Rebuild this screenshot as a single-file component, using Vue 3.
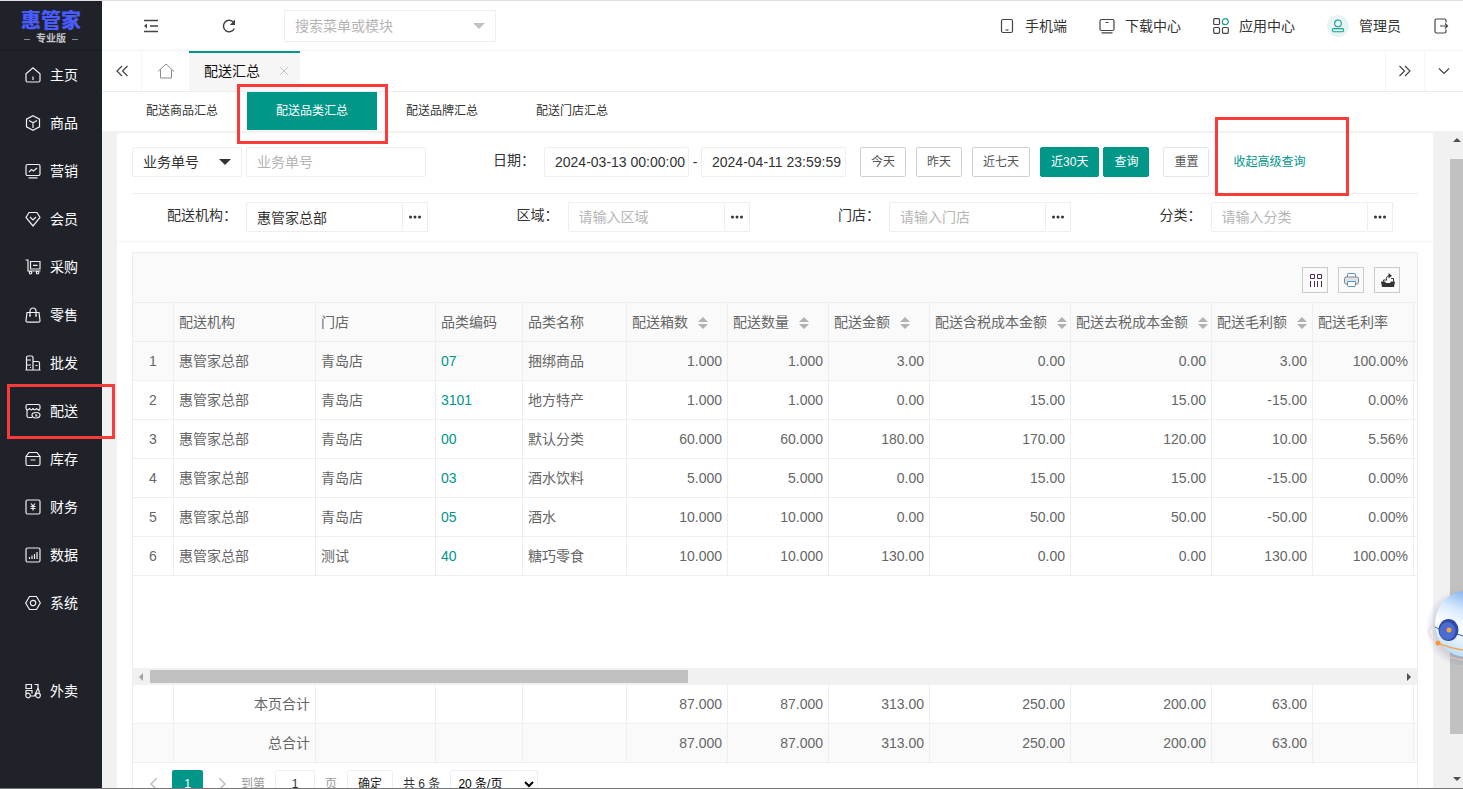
<template>
  <div class="layout">
    <aside class="sidebar">
      <div class="logo">
        <strong class="logo-name">惠管家</strong>
        <span class="logo-edition">专业版</span>
      </div>
      <nav class="menu">
        <a
          v-for="item in menus"
          :key="item.name"
          href="#"
          class="menu-item"
          :class="{ 'menu-extra': item.extra }"
        >
          <svg class="menu-icon" viewBox="0 0 16 16"><path :d="item.icon" /></svg>
          <span>{{ item.name }}</span>
          <i v-if="item.marked" class="mark mark-menu"></i>
        </a>
      </nav>
    </aside>

    <div class="main">
      <header class="header">
        <button class="icon-btn" aria-label="收起菜单">
          <svg class="line-icon" viewBox="0 0 16 16"><path d="M1 2.500h14M7 8h8M1 13.500h14" /><path class="fill" d="M1 8l3-2.500v5z" /></svg>
        </button>
        <button class="icon-btn refresh" aria-label="刷新">
          <svg class="line-icon" viewBox="0 0 16 16"><path d="M13.300 10.500A5.700 5.700 0 1 1 12.600 4.500" /><path class="fill" d="M14 1.500v5.500H8.800z" /></svg>
        </button>
        <div class="search">
          <input type="text" placeholder="搜索菜单或模块" aria-label="搜索菜单或模块" />
          <svg class="caret caret-light" viewBox="0 0 12 6"><path d="M0 0h12L6 6z" /></svg>
        </div>
        <div class="header-links">
          <a href="#">
            <svg class="line-icon" viewBox="0 0 16 16"><rect x="2.500" y="1.500" width="11" height="13" rx="1.500" /><path d="M6.500 12h3" /></svg>
            手机端
          </a>
          <a href="#">
            <svg class="line-icon" viewBox="0 0 16 16"><rect x="1" y="1.500" width="14" height="11" rx="1.500" /><path d="M6.500 4.500h3M2.500 14.800h11" /></svg>
            下载中心
          </a>
          <a href="#">
            <svg class="line-icon" viewBox="0 0 16 16"><rect x=".7" y=".7" width="5.800" height="5.800" rx="1" /><rect x=".7" y="9.500" width="5.800" height="5.800" rx="1" /><rect x="9.500" y="9.500" width="5.800" height="5.800" rx="1" /><circle class="teal" cx="12.300" cy="3.700" r="3" /></svg>
            应用中心
          </a>
          <a href="#" class="user">
            <span class="avatar">
              <svg class="line-icon" viewBox="0 0 16 16"><circle class="teal" cx="8" cy="5" r="3.800" /><rect class="teal" x="1.500" y="11" width="13" height="3.500" rx="1.700" /></svg>
            </span>
            管理员
          </a>
          <a href="#" class="logout" aria-label="退出">
            <svg class="line-icon" viewBox="0 0 16 16"><path d="M13 4.500V2.500a1.500 1.500 0 0 0-1.500-1.500h-8A1.500 1.500 0 0 0 2 2.500v11A1.500 1.500 0 0 0 3.500 15h8a1.500 1.500 0 0 0 1.500-1.500v-2M7 8h7.500M12 5.500L14.500 8 12 10.500" /></svg>
          </a>
        </div>
      </header>

      <div class="tabs">
        <button class="tab-ctrl" aria-label="向左">
          <svg class="line-icon" viewBox="0 0 16 16"><path d="M8 3L3 8l5 5M13.500 3l-5 5 5 5" /></svg>
        </button>
        <button class="tab-home" aria-label="首页">
          <svg class="home-icon" viewBox="0 0 18 18"><path d="M1 9.500L9 2l8 7.500M3.500 7.500V16h11V7.500" /></svg>
        </button>
        <div class="tab-active">
          <span>配送汇总</span>
          <button aria-label="关闭">
            <svg viewBox="0 0 8 8"><path d="M0 0l8 8M8 0L0 8" /></svg>
          </button>
        </div>
        <button class="tab-ctrl tab-next" aria-label="向右">
          <svg class="line-icon" viewBox="0 0 16 16"><path d="M2.500 3l5 5-5 5M8 3l5 5-5 5" /></svg>
        </button>
        <button class="tab-ctrl tab-more" aria-label="更多">
          <svg class="line-icon" viewBox="0 0 16 16"><path d="M3 5.500l5 5 5-5" /></svg>
        </button>
      </div>

      <div class="sub-tabs">
        <button
          v-for="(name, index) in subTabs"
          :key="name"
          :class="{ active: index === currentTab }"
          @click="currentTab = index"
        >
          {{ name }}
          <i v-if="index === 1" class="mark mark-tab"></i>
        </button>
      </div>

      <div class="content">
        <div class="card">
          <form class="filters" @submit.prevent>
            <div class="filter-row">
              <div class="select-box">
                <select aria-label="单号类型">
                  <option>业务单号</option>
                </select>
                <svg class="caret" viewBox="0 0 12 6"><path d="M0 0h12L6 6z" /></svg>
              </div>
              <input class="field order-no" type="text" placeholder="业务单号" aria-label="业务单号" />
              <label class="field-label date-label" for="dateStart">日期：</label>
              <input id="dateStart" v-model="dateStart" class="field date" type="text" />
              <span class="dash">-</span>
              <input v-model="dateEnd" class="field date" type="text" aria-label="结束日期" />
              <div class="range-btns">
                <button class="btn">今天</button>
                <button class="btn">昨天</button>
                <button class="btn">近七天</button>
                <button class="btn primary">近30天</button>
              </div>
              <button class="btn primary query">查询</button>
              <button class="btn reset">重置</button>
              <a href="#" class="toggle">收起高级查询<i class="mark mark-toggle"></i></a>
            </div>
            <div class="filter-row advanced">
              <div v-for="f in filters" :key="f.id" class="filter-item">
                <label class="field-label" :for="f.id">{{ f.label }}：</label>
                <input :id="f.id" v-model="f.value" class="field picker" type="text" :placeholder="f.placeholder" />
                <button class="more" :aria-label="'选择' + f.label">
                  <svg viewBox="0 0 12 4"><circle cx="1.500" cy="2" r="1.500" /><circle cx="6" cy="2" r="1.500" /><circle cx="10.500" cy="2" r="1.500" /></svg>
                </button>
              </div>
            </div>
          </form>

          <div class="grid">
            <div class="toolbar">
              <button aria-label="筛选列">
                <svg viewBox="0 0 16 16" class="tool columns"><path d="M3.500 2.500h4v4h-4zM10.500 2.500h4v4h-4zM3.500 9v6M7.500 9v6M10.500 9v6M14.500 9v6" /></svg>
              </button>
              <button aria-label="打印">
                <svg viewBox="0 0 16 16" class="tool print"><path class="paper" d="M4.500 5V3a1.500 1.500 0 0 1 1.500-1.500h5A1.500 1.500 0 0 1 12.500 3v2" /><path class="body" d="M4.500 12H3a1.500 1.500 0 0 1-1.500-1.500v-4A1.500 1.500 0 0 1 3 5h11a1.500 1.500 0 0 1 1.500 1.500v4A1.500 1.500 0 0 1 14 12h-1.500" /><path class="paper" d="M4.500 9.500h8V13a1.500 1.500 0 0 1-1.500 1.500H6A1.500 1.500 0 0 1 4.500 13z" /></svg>
              </button>
              <button aria-label="导出">
                <svg viewBox="0 0 16 16" class="tool"><path d="M4.500 9.500V8H7M12 6.500h2.500V9.500M7.500 8.500c-.5-3 .5-4.800 3-4.800" /><path class="solid" d="M9.500 1l3.500 2.700-3.500 2.800zM2 9.500h4l1 1.500h4l1-1.500h4L15 15H3z" /></svg>
              </button>
            </div>
            <table>
              <colgroup>
                <col v-for="c in columns" :key="c.key" :class="c.size" />
                <col />
              </colgroup>
              <thead>
                <tr>
                  <th v-for="c in columns" :key="c.key">
                    {{ c.title }}
                    <svg v-if="c.sort" class="sort" viewBox="0 0 10 12"><path d="M0 5l5-5 5 5zM0 7h10l-5 5z" /></svg>
                  </th>
                  <th></th>
                </tr>
              </thead>
              <tbody>
                <tr v-for="(row, i) in rows" :key="i" :class="{ hover: i === 0 }">
                  <td class="center">{{ i + 1 }}</td>
                  <td>{{ row[0] }}</td>
                  <td>{{ row[1] }}</td>
                  <td><a href="#">{{ row[2] }}</a></td>
                  <td>{{ row[3] }}</td>
                  <td v-for="(v, j) in row.slice(4)" :key="j" class="num">{{ v }}</td>
                  <td></td>
                </tr>
              </tbody>
            </table>
            <div class="blank"></div>
            <div class="h-scroll">
              <svg viewBox="0 0 6 8" class="arrow dim"><path d="M5 0v8L1 4z" /></svg>
              <div class="h-track"><div class="h-thumb"></div></div>
              <svg viewBox="0 0 6 8" class="arrow"><path d="M1 0v8l4-4z" /></svg>
            </div>
            <table>
              <colgroup>
                <col v-for="c in columns" :key="c.key" :class="c.size" />
                <col />
              </colgroup>
              <tbody>
                <tr v-for="(t, i) in totals" :key="t" :class="{ hover: i === 1 }">
                  <td></td>
                  <td class="num">{{ t }}</td>
                  <td></td>
                  <td></td>
                  <td></td>
                  <td v-for="(v, j) in sums" :key="j" class="num">{{ v }}</td>
                  <td></td>
                  <td></td>
                </tr>
              </tbody>
            </table>
            <div class="pager">
              <button class="page-arrow" aria-label="上一页">
                <svg viewBox="0 0 8 12"><path d="M7 0L1 6l6 6" /></svg>
              </button>
              <button class="page-current">1</button>
              <button class="page-arrow" aria-label="下一页">
                <svg viewBox="0 0 8 12"><path d="M1 0l6 6-6 6" /></svg>
              </button>
              <label for="page">到第</label>
              <input id="page" v-model="page" type="text" />
              <span>页</span>
              <button class="page-go">确定</button>
              <span class="page-count">共 6 条</span>
              <select aria-label="每页条数">
                <option>20 条/页</option>
              </select>
            </div>
          </div>
        </div>
        <div class="v-scroll">
          <svg viewBox="0 0 8 6" class="v-arrow"><path d="M0 5h8L4 1z" /></svg>
          <div class="v-track"><div class="v-thumb"></div></div>
          <svg viewBox="0 0 8 6" class="v-arrow"><path d="M0 1h8L4 5z" /></svg>
        </div>
      </div>
    </div>

    <svg class="robot" viewBox="0 0 38 80">
      <defs>
        <linearGradient id="shell" x1="0.700" y1="0" x2="0.300" y2="1">
          <stop offset="0" stop-color="#6ba4ee" />
          <stop offset="0.350" stop-color="#d6e8fd" />
          <stop offset="0.600" stop-color="#ffffff" />
          <stop offset="1" stop-color="#b5dcf8" />
        </linearGradient>
        <radialGradient id="glow">
          <stop offset="0.700" stop-color="#5064a0" stop-opacity="0.250" />
          <stop offset="1" stop-color="#5064a0" stop-opacity="0" />
        </radialGradient>
      </defs>
      <circle cx="40" cy="43" r="40" fill="url(#glow)" />
      <ellipse cx="41" cy="39" rx="31" ry="33" fill="url(#shell)" />
      <path class="visor" d="M10 42l6 3M32 49l6 2" />
      <ellipse cx="23.500" cy="45" rx="10" ry="11" fill="#3149a8" />
      <ellipse cx="22.500" cy="46" rx="8" ry="9" fill="#4b6bd0" />
      <circle cx="24" cy="45" r="2.500" fill="#f6a33c" />
      <path class="orbit faint" d="M10 39c-9 4-8 13 3 19" />
      <path class="orbit" d="M13 58c7 3 16 6 25 7" />
      <path class="orbit faint" d="M17 61c-2 8 10 13 21 14" />
      <circle cx="13" cy="58" r="2.500" fill="#f79a34" />
    </svg>
  </div>
</template>

<script setup>
import { ref, reactive } from 'vue';

const menus = [
  { name: '主页', icon: 'M1 6.800L8 .8l7 6V13.500A1.500 1.500 0 0 1 13.500 15h-11A1.500 1.500 0 0 1 1 13.500zM8 9.500V13' },
  { name: '商品', icon: 'M8 .7l6.500 3.500v7.600L8 15.300l-6.500-3.500V4.200zM4 5.500l4 2.200 4-2.200M8 7.700V13' },
  { name: '营销', icon: 'M2.500 1.500h11A1.500 1.500 0 0 1 15 3v8a1.500 1.500 0 0 1-1.500 1.500h-11A1.500 1.500 0 0 1 1 11V3a1.500 1.500 0 0 1 1.500-1.500zM4 9l2.500-2.500L8.500 8 12 5M3.500 14.800h9' },
  { name: '会员', icon: 'M4 1.500h8l3 5L8 15 1 6.500zM5 6l3 3 3-3' },
  { name: '采购', icon: 'M.5 1H3v11h12.500M5.500 2.500h9.500V10H5.500zM8 6.300h4.500M5.500 12.500a1.200 1.200 0 1 0 .1 2.400 1.200 1.200 0 0 0 0-2.400M12.500 12.500a1.200 1.200 0 1 0 .1 2.400 1.200 1.200 0 0 0 0-2.400' },
  { name: '零售', icon: 'M2 5.500h12l1 8a1.500 1.500 0 0 1-1.500 1.700h-11A1.500 1.500 0 0 1 1 13.500zM5 9V4a3 3 0 0 1 6 0v5M4 9h2M10 9h2' },
  { name: '批发', icon: 'M1.500 15V2.500A1.500 1.500 0 0 1 3 1h3.500A1.500 1.500 0 0 1 8 2.500V15M8 6.500h5A1.500 1.500 0 0 1 14.500 8v7M.5 15h15M1.500 5H6M1.500 10H6M5 12.500h1M10.500 10.500h2' },
  { name: '配送', icon: 'M7 14.500H3.500A1.500 1.500 0 0 1 2 13V7M14 7v1M1 5V3a1.500 1.500 0 0 1 1.500-1.500h11A1.500 1.500 0 0 1 15 3v2c0 2.500-3 2.500-3.500 0C11 7.500 8.500 7.500 8 5 7.500 7.500 5 7.500 4.500 5 4 7.500 1 7.500 1 5M11 9.500c2.500 0 4 1.200 4 2.600S13.500 15 11 15s-4-1.200-4-2.900 1.500-2.600 4-2.600M11 11v2h1.500', marked: true },
  { name: '库存', icon: 'M4 1.500h8l3 4v7.500a1.500 1.500 0 0 1-1.500 1.500h-11A1.500 1.500 0 0 1 1 13V5.500zM1 5.500h14M5.500 9h5' },
  { name: '财务', icon: 'M2.500 1h11A1.500 1.500 0 0 1 15 2.500v11a1.500 1.500 0 0 1-1.500 1.500h-11A1.500 1.500 0 0 1 1 13.500v-11A1.500 1.500 0 0 1 2.500 1zM6 4.500l2 2.500 2-2.500M8 7v4.500M5.500 7.500h5M5.500 9.500h5' },
  { name: '数据', icon: 'M2.500 1h11A1.500 1.500 0 0 1 15 2.500v11a1.500 1.500 0 0 1-1.500 1.500h-11A1.500 1.500 0 0 1 1 13.500v-11A1.500 1.500 0 0 1 2.500 1zM4.500 10v2M7 8.500V12M9.500 7v5M12 5v7' },
  { name: '系统', icon: 'M4.500 1.500h7L15.300 8l-3.800 6.500h-7L.7 8zM8 5.300a2.700 2.700 0 1 0 .1 5.400 2.700 2.700 0 0 0-.1-5.400' },
  { name: '外卖', icon: 'M1 1.500h5.500v4H1zM.5 7.500H7v3M9.500 1.500H13V5l1.500 4.500M1 8v4M5.500 13h4L13 5M3 10.200a2.300 2.300 0 1 0 .1 4.600 2.300 2.300 0 0 0-.1-4.600M13 10.200a2.300 2.300 0 1 0 .1 4.600 2.300 2.300 0 0 0-.1-4.600', extra: true }
];

const subTabs = ['配送商品汇总', '配送品类汇总', '配送品牌汇总', '配送门店汇总'];
const currentTab = ref(1);

const dateStart = ref('2024-03-13 00:00:00');
const dateEnd = ref('2024-04-11 23:59:59');
const page = ref('1');

const filters = reactive([
  { id: 'org', label: '配送机构', value: '惠管家总部', placeholder: '请输入配送机构' },
  { id: 'area', label: '区域', value: '', placeholder: '请输入区域' },
  { id: 'shop', label: '门店', value: '', placeholder: '请输入门店' },
  { id: 'category', label: '分类', value: '', placeholder: '请输入分类' }
]);

const columns = [
  { key: 'index', title: '', size: 'c-index' },
  { key: 'org', title: '配送机构', size: 'c-org' },
  { key: 'shop', title: '门店', size: 'c-shop' },
  { key: 'code', title: '品类编码', size: 'c-code' },
  { key: 'name', title: '品类名称', size: 'c-name' },
  { key: 'box', title: '配送箱数', size: 'c-num', sort: true },
  { key: 'qty', title: '配送数量', size: 'c-num', sort: true },
  { key: 'amount', title: '配送金额', size: 'c-num', sort: true },
  { key: 'costTax', title: '配送含税成本金额', size: 'c-wide', sort: true },
  { key: 'cost', title: '配送去税成本金额', size: 'c-wide', sort: true },
  { key: 'profit', title: '配送毛利额', size: 'c-num', sort: true },
  { key: 'rate', title: '配送毛利率', size: 'c-num' }
];

const rows = [
  ['惠管家总部', '青岛店', '07', '捆绑商品', '1.000', '1.000', '3.00', '0.00', '0.00', '3.00', '100.00%'],
  ['惠管家总部', '青岛店', '3101', '地方特产', '1.000', '1.000', '0.00', '15.00', '15.00', '-15.00', '0.00%'],
  ['惠管家总部', '青岛店', '00', '默认分类', '60.000', '60.000', '180.00', '170.00', '120.00', '10.00', '5.56%'],
  ['惠管家总部', '青岛店', '03', '酒水饮料', '5.000', '5.000', '0.00', '15.00', '15.00', '-15.00', '0.00%'],
  ['惠管家总部', '青岛店', '05', '酒水', '10.000', '10.000', '0.00', '50.00', '50.00', '-50.00', '0.00%'],
  ['惠管家总部', '测试', '40', '糖巧零食', '10.000', '10.000', '130.00', '0.00', '0.00', '130.00', '100.00%']
];

const totals = ['本页合计', '总合计'];
const sums = ['87.000', '87.000', '313.00', '250.00', '200.00', '63.00'];
</script>

<style>
body {
  margin: 0;
}
</style>

<style scoped>
.layout,
.layout * {
  box-sizing: border-box;
}

.layout {
  display: flex;
  height: 100vh;
  overflow: hidden;
  position: relative;
  border-top: 1px solid #e0e0e0;
  border-bottom: 1px solid #777;
  background: #f1f1f1;
  color: #333;
  font-family: 'Liberation Sans', 'Noto Sans CJK SC', sans-serif;
  font-size: 14px;
  line-height: 20px;
}

button,
input,
select {
  margin: 0;
  padding: 0;
  border: 0;
  background: none;
  color: inherit;
  font: inherit;
  outline: none;
}

a {
  color: inherit;
  text-decoration: none;
}

svg {
  display: block;
  flex: none;
}

input::placeholder {
  color: #b5b5b5;
}

/* red frames around the highlighted parts */
.mark {
  position: absolute;
  border: 3px solid #fb3a3a;
  pointer-events: none;
  z-index: 5;
}

.mark-menu {
  inset: -3px -13px -4px 7px;
}

.mark-tab {
  inset: -8px -11px -14px -10px;
}

.mark-toggle {
  inset: -30px -44px -19px -18px;
}

/* sidebar */
.sidebar {
  flex: none;
  width: 102px;
  position: relative;
  z-index: 2;
  background: #20222a;
  color: #fff;
}

.logo {
  height: 50px;
  padding-top: 8px;
  display: flex;
  flex-direction: column;
  align-items: center;
  border-bottom: 1px solid #1b1c22;
}

.logo-name {
  color: #4a5cff;
  font-size: 20px;
  line-height: 24px;
  font-weight: 900;
}

.logo-edition {
  display: flex;
  align-items: center;
  gap: 6px;
  color: #c4c4c8;
  font-size: 10px;
  line-height: 12px;
  font-weight: bold;
}

.logo-edition::before,
.logo-edition::after {
  content: '';
  width: 6px;
  height: 1px;
  background: #8a8b90;
}

.menu-item {
  display: flex;
  align-items: center;
  gap: 9px;
  height: 48px;
  padding-left: 25px;
  position: relative;
}

.menu-extra {
  margin-top: 40px;
}

.menu-icon {
  width: 16px;
  height: 16px;
  fill: none;
  stroke: #f0f0f0;
  stroke-width: 1.2;
}

/* header */
.main {
  flex: 1;
  min-width: 0;
  display: flex;
  flex-direction: column;
}

.header {
  flex: none;
  display: flex;
  align-items: center;
  height: 50px;
  padding: 0 14px 0 41px;
  background: #fff;
  border-bottom: 1px solid #f4f4f4;
}

.line-icon {
  width: 16px;
  height: 16px;
  fill: none;
  stroke: #444;
  stroke-width: 1.2;
}

.line-icon .fill {
  fill: #444;
  stroke: none;
}

.line-icon .teal {
  stroke: #16a090;
}

.icon-btn .line-icon {
  stroke-width: 1.5;
}

.refresh {
  margin-left: 62px;
}

.search {
  display: flex;
  align-items: center;
  width: 212px;
  height: 32px;
  margin-left: 47px;
  padding: 0 10px;
  border: 1px solid #eee;
}

.search input {
  flex: 1;
  min-width: 0;
}

.caret {
  width: 12px;
  height: 6px;
  fill: #333;
}

.caret-light {
  fill: #c2c2c2;
}

.header-links {
  display: flex;
  gap: 32px;
  margin-left: auto;
}

.header-links a {
  display: flex;
  align-items: center;
  gap: 10px;
}

.avatar {
  display: flex;
  align-items: center;
  justify-content: center;
  width: 22px;
  height: 22px;
  border-radius: 50%;
  background: #e6f5f3;
}

.avatar .line-icon {
  width: 14px;
  height: 14px;
}

/* page tabs */
.tabs {
  flex: none;
  display: flex;
  height: 40px;
  background: #fff;
}

.tab-ctrl {
  display: flex;
  align-items: center;
  justify-content: center;
  width: 40px;
  border-right: 1px solid #f4f4f4;
}

.tab-home {
  display: flex;
  align-items: center;
  justify-content: center;
  width: 47px;
}

.home-icon {
  width: 18px;
  height: 18px;
  fill: none;
  stroke: #8c8c8c;
}

.tab-active {
  display: flex;
  align-items: center;
  gap: 20px;
  padding: 0 12px 2px 15px;
  border-top: 2px solid #009688;
  background: #f6f6f6;
  color: #111;
}

.tab-active svg {
  width: 8px;
  height: 8px;
  stroke: #c2c2c2;
}

.tab-next {
  margin-left: auto;
  border-left: 1px solid #f4f4f4;
}

.tab-more {
  width: 38px;
  border-right: 0;
}

.sub-tabs {
  flex: none;
  display: flex;
  height: 40px;
  padding: 0 15px 1px;
  border-top: 1px solid #ececec;
  background: #fff;
}

.sub-tabs button {
  position: relative;
  width: 130px;
  font-size: 12px;
}

.sub-tabs .active {
  background: #009688;
  color: #fff;
}

/* content */
.content {
  flex: 1;
  min-height: 0;
  display: flex;
}

.card {
  flex: 1;
  min-width: 0;
  align-self: flex-start;
  margin: 2px 17px 0 15px;
  border-radius: 2px;
  background: #fff;
}

.filters {
  padding: 0 15px;
  border-bottom: 1px solid #f4f4f4;
}

.filter-row {
  display: flex;
  align-items: flex-start;
  height: 61px;
  padding-top: 14px;
  border-bottom: 1px solid #eee;
}

.filter-row.advanced {
  height: 47px;
  padding-top: 8px;
  border-bottom: 0;
}

.field,
.select-box {
  height: 30px;
  padding: 0 10px;
  border: 1px solid #eee;
  border-radius: 2px;
}

.select-box {
  display: flex;
  align-items: center;
  width: 110px;
}

.select-box select {
  flex: 1;
  min-width: 0;
  appearance: none;
}

.order-no {
  width: 180px;
  margin-left: 4px;
}

.field-label {
  width: 105px;
  margin-right: 9px;
  line-height: 26px;
  text-align: right;
}

.date-label {
  width: 109px;
}

.date {
  width: 145px;
  padding-right: 0;
}

.dash {
  width: 12px;
  line-height: 30px;
  text-align: center;
}

.range-btns {
  display: flex;
  gap: 10px;
  margin-left: 14px;
}

.btn {
  height: 30px;
  padding: 0 10px;
  border: 1px solid #d0d0d0;
  border-radius: 2px;
  color: #555;
  font-size: 12px;
  line-height: 28px;
  white-space: nowrap;
}

.btn.primary {
  border-color: #009688;
  background: #009688;
  color: #fff;
}

.query {
  margin-left: 4px;
}

.reset {
  margin-left: 14px;
  border-color: #e6e6e6;
}

.toggle {
  position: relative;
  margin-left: 24px;
  color: #009688;
  font-size: 12px;
  line-height: 30px;
  white-space: nowrap;
}

.filter-item {
  flex: 1;
  display: flex;
  align-items: flex-start;
}

.picker {
  width: 157px;
}

.more {
  display: flex;
  align-items: center;
  justify-content: center;
  width: 25px;
  height: 30px;
  border: 1px solid #eee;
  border-left: 0;
}

.more svg {
  width: 12px;
  height: 4px;
  fill: #333;
}

/* table */
.grid {
  margin: 10px 15px 0;
  border: 1px solid #eee;
}

.toolbar {
  display: flex;
  align-items: center;
  justify-content: flex-end;
  gap: 10px;
  height: 50px;
  padding: 4px 17px 0;
  border-bottom: 1px solid #eee;
  background: #fafafa;
}

.toolbar button {
  display: flex;
  align-items: center;
  justify-content: center;
  width: 26px;
  height: 26px;
  border: 1px solid #ccc;
}

.tool {
  width: 16px;
  height: 16px;
  fill: none;
  stroke: #333;
}

.tool.columns {
  stroke: #4a2b52;
}

.tool .body {
  fill: #dfe3e8;
  stroke: #7d8791;
}

.tool .paper {
  fill: #fff;
  stroke: #5a93c4;
}

.tool .solid {
  fill: #333;
  stroke: none;
}

table {
  width: 100%;
  table-layout: fixed;
  border-collapse: separate;
  border-spacing: 0;
  color: #666;
}

.c-index {
  width: 41px;
}

.c-org {
  width: 142px;
}

.c-shop {
  width: 120px;
}

.c-code {
  width: 87px;
}

.c-name {
  width: 104px;
}

.c-num {
  width: 101px;
}

.c-wide {
  width: 141px;
}

th,
td {
  height: 39px;
  padding: 0 5px;
  border-right: 1px solid #eee;
  border-bottom: 1px solid #eee;
  font-weight: normal;
  text-align: left;
  white-space: nowrap;
}

th:last-child,
td:last-child {
  padding: 0;
  border-right: 0;
}

th,
.hover td {
  background: #fafafa;
}

td a {
  color: #009688;
}

.center {
  text-align: center;
}

.num {
  text-align: right;
}

.sort {
  display: inline-block;
  width: 10px;
  height: 12px;
  margin-left: 6px;
  vertical-align: -2px;
  fill: #b2b2b2;
}

.blank {
  height: 92px;
}

.h-scroll {
  display: flex;
  align-items: center;
  height: 17px;
  padding: 0 5px;
  gap: 6px;
  background: #f1f1f1;
}

.arrow {
  width: 6px;
  height: 8px;
  fill: #505050;
}

.dim {
  fill: #a3a3a3;
}

.h-track {
  flex: 1;
}

.h-thumb {
  width: 43%;
  height: 13px;
  background: #c1c1c1;
}

/* pager */
.pager {
  display: flex;
  align-items: center;
  padding: 7px 7px 8px;
  color: #999;
  font-size: 12px;
  line-height: 18px;
}

.page-arrow {
  display: flex;
  align-items: center;
  justify-content: center;
  width: 28px;
  height: 28px;
}

.page-arrow svg {
  width: 8px;
  height: 12px;
  fill: none;
  stroke: #c0c0c0;
  stroke-width: 1.5;
}

.page-current {
  width: 31px;
  height: 28px;
  margin: 0 5px 0 4px;
  border-radius: 2px;
  background: #009688;
  color: #fff;
}

.pager label {
  margin-left: 5px;
}

.pager input {
  width: 40px;
  height: 28px;
  margin: 0 10px;
  border: 1px solid #eee;
  border-radius: 2px;
  color: #333;
  text-align: center;
}

.page-go {
  width: 46px;
  height: 28px;
  margin: 0 10px;
  border: 1px solid #eee;
  border-radius: 2px;
  color: #222;
}

.page-count {
  color: #333;
}

.pager select {
  width: 88px;
  height: 28px;
  margin-left: 10px;
  padding-left: 3px;
  border: 1px solid #eee;
  border-radius: 2px;
  color: #000;
}

/* page scrollbar */
.v-scroll {
  flex: none;
  display: flex;
  flex-direction: column;
  align-items: center;
  width: 13px;
  padding: 6px 0;
}

.v-arrow {
  width: 8px;
  height: 6px;
  fill: #505050;
}

.v-track {
  flex: 1;
  width: 100%;
  padding: 16px 0 5px;
}

.v-thumb {
  height: 94%;
  background: #c1c1c1;
}

.robot {
  position: absolute;
  right: 0;
  top: 584px;
  width: 38px;
  height: 80px;
  z-index: 3;
}

.robot .visor {
  fill: none;
  stroke: #3f58b5;
}

.robot .orbit {
  fill: none;
  stroke: #f7a95a;
  stroke-width: 1.5;
}

.robot .faint {
  stroke: #f3cfae;
  stroke-width: 1;
}
</style>
